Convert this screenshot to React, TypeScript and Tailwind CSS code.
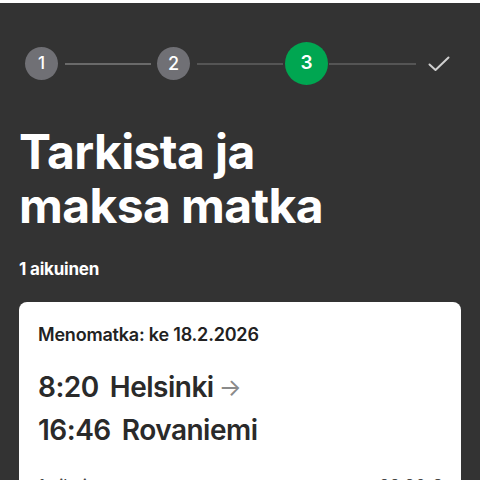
import React from 'react';

const Check = () => (
  <svg width="22" height="16" viewBox="0 0 22 16" fill="none">
    <path d="M1.5 8.5 L7.5 14 L20.5 1.5" stroke="#d0d0d0" strokeWidth="2" strokeLinecap="round" strokeLinejoin="round" />
  </svg>
);

const App: React.FC = () => {
  return (
    <div className="min-h-screen bg-[#333333] overflow-hidden" style={{ fontFamily: 'Inter, "Noto Sans", sans-serif' }}>
      <div className="h-[3px] bg-white" />

      {/* Stepper */}
      <div className="flex items-center h-[122px] pl-[25px] pb-[1px]">
        <div className="w-[33px] h-[33px] rounded-full bg-[#707075] flex items-center justify-center text-white text-[17px] font-medium">1</div>
        <div className="h-[2px] w-[86px] ml-[7px] bg-[#6a6a6a]" />
        <div className="w-[33px] h-[33px] ml-[6px] rounded-full bg-[#707075] flex items-center justify-center text-white text-[18px] font-medium">2</div>
        <div className="h-[2px] w-[86px] ml-[7px] bg-[#555555]" />
        <div className="w-[43px] h-[43px] ml-[2px] rounded-full bg-[#00a651] flex items-center justify-center text-white text-[19px] font-semibold">3</div>
        <div className="h-[2px] w-[87px] ml-[1px] bg-[#555555]" />
        <div className="ml-[12px]"><Check /></div>
      </div>

      <div className="px-[19px]">
        <h1 className="text-white font-bold text-[48px] leading-[54px] tracking-[-0.6px]">
          Tarkista ja<br />maksa matka
        </h1>
        <p className="mt-[24px] text-white font-bold text-[17px] tracking-[-0.2px]">1 aikuinen</p>

        <div className="mt-[19px] bg-white rounded-lg px-[19px] pt-[19px] pb-6">
          <p className="text-[#222] font-semibold text-[18px] tracking-[-0.2px]">Menomatka: ke 18.2.2026</p>
          <div className="mt-[18px] text-[#2a2a2a] font-semibold text-[28px] leading-[43px] tracking-[-0.5px]">
            <div className="flex items-center">
              <span>8:20</span>
              <span className="ml-[11px]">Helsinki</span>
              <span className="ml-[5px] text-[#8a8a8a] text-[24px] font-normal">→</span>
            </div>
            <div className="flex items-center">
              <span>16:46</span>
              <span className="ml-[11px]">Rovaniemi</span>
            </div>
          </div>
          <div className="mt-[22px] flex justify-between text-[#444] text-[17px]">
            <span>1 aikuinen</span>
            <span>99,90 €</span>
          </div>
        </div>
      </div>
    </div>
  );
};

export default App;
